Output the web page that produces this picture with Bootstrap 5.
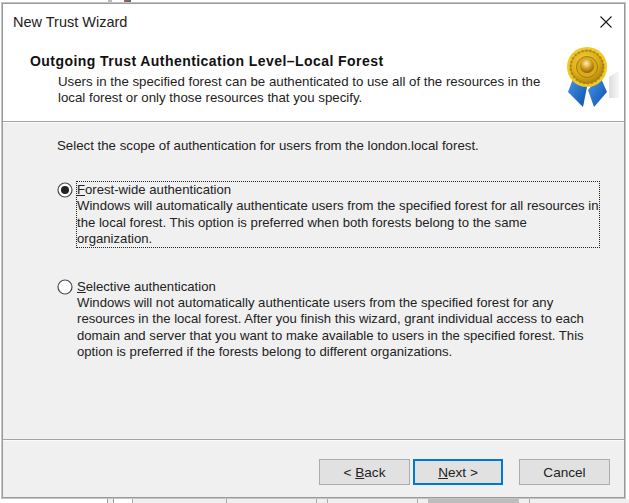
<!DOCTYPE html>
<html lang="en"><head><meta charset="utf-8"><title>New Trust Wizard</title>
<link href="https://cdn.jsdelivr.net/npm/bootstrap@5.3.0/dist/css/bootstrap.min.css" rel="stylesheet">
<style>
html,body{margin:0;height:503px;overflow:hidden;background:#fff}
body{font-family:"Liberation Sans",Arial,sans-serif;font-size:13.28px;line-height:16.2px;color:#222}
.stripa{height:2px;background:linear-gradient(90deg,#fff 108px,#bbb 108px,#bbb 112px,#fff 112px,#fff 124px,#9a6a50 124px,#6a5a80 131px,#fff 131px)}
.stripb{height:5px;margin-top:1px;background:linear-gradient(90deg,#fff 107px,#999 107px,#999 108px,#f0f0f0 108px,#f0f0f0 113px,#999 113px,#999 114px,#fff 114px,#fff 132px,#aaa 132px,#aaa 133px,#f0f0f0 133px,#f0f0f0 226px,#aaa 226px,#aaa 227px,#f0f0f0 227px,#f0f0f0 316px,#aaa 316px,#aaa 317px,#f0f0f0 317px,#f0f0f0 327px,#aaa 327px,#aaa 328px,#f0f0f0 328px,#f0f0f0 417px,#aaa 417px,#aaa 418px,#f0f0f0 418px,#f0f0f0 428px,#bdbdbd 428px,#bdbdbd 519px,#f0f0f0 519px,#f0f0f0 529px,#aaa 529px,#aaa 530px,#f0f0f0 530px)}
.wiz{height:495px;margin:1px 4px 0 2px;border:1px solid #9a9a9a;box-shadow:0 0 0 1px #c4c4c4;background:#f0f0f0;display:flex;flex-direction:column}
.top{background:#fff;height:118px;border-bottom:1px solid #a3a3a3;box-shadow:0 1px 0 #fbfbfb;flex:none;position:relative}
.ttl{height:38px;padding:9px 0 0 10px;font-size:14.5px;line-height:18px}
.xbtn{position:absolute;right:11px;top:11px;width:14px;height:14px}
.hd{font-weight:700;font-size:14px;letter-spacing:.44px;line-height:17px;margin:11px 0 0 27px;color:#111}
.sub{margin:4px 0 0 55px;width:520px}
.med{position:absolute;left:562px;top:40px;width:56px;height:64px}
.mid{flex:1;padding:16px 0 0 54px;position:relative}
.intro{margin-bottom:28px}
.opt{display:flex;align-items:flex-start}
.rad{width:16px;height:16px;flex:none;margin:0 4px 0 0}
.lbl{width:524px;font-size:13.15px}
.dots{border:1px dotted #222;margin:-1px;width:524px;white-space:nowrap}
.opt2{margin-top:32px}
.lbl2{white-space:nowrap}
.uk{text-decoration:underline}
.bot{height:58px;flex:none;border-top:1px solid #a3a3a3;box-shadow:inset 0 1px 0 #fbfbfb;display:flex;justify-content:flex-end;align-items:flex-start;padding:19px 14px 0 0}
.wbtn{width:91px;height:26px;background:#e1e1e1;border:1px solid #adadad;border-radius:0;padding:0;font-size:13.6px;line-height:23px;color:#222}
.wbtn:hover{background:#e1e1e1}
.nx{width:90px;border:2px solid #0078d7;margin:0 16px 0 3px}
</style></head><body>
<div class="stripa"></div>
<div class="wiz">
  <div class="top">
    <div class="ttl">New Trust Wizard</div>
    <svg class="xbtn" viewBox="0 0 14 14"><path d="M1.5 1.5 12.5 12.5M12.5 1.5 1.5 12.5" stroke="#1a1a1a" stroke-width="1.1" fill="none"/></svg>
    <div class="hd">Outgoing Trust Authentication Level–Local Forest</div>
    <div class="sub">Users in the specified forest can be authenticated to use all of the resources in the<br>local forest or only those resources that you specify.</div>
    <svg class="med" viewBox="0 0 56 64">
      <defs>
        <radialGradient id="g1" cx=".42" cy=".35" r=".7"><stop offset="0" stop-color="#f5d24a"/><stop offset=".6" stop-color="#dcae18"/><stop offset="1" stop-color="#a87a0c"/></radialGradient>
        <radialGradient id="g2" cx=".45" cy=".32" r=".7"><stop offset="0" stop-color="#fdf0c0"/><stop offset=".55" stop-color="#cf9a14"/><stop offset="1" stop-color="#8a6208"/></radialGradient>
        <linearGradient id="b1" x1="0" y1="0" x2="1" y2="1"><stop offset="0" stop-color="#4a98e8"/><stop offset="1" stop-color="#0b4fae"/></linearGradient>
        <linearGradient id="sh" x1="0" y1="0" x2="1" y2="0"><stop offset="0" stop-color="#dcdcdc"/><stop offset="1" stop-color="#f8f8f8"/></linearGradient>
      </defs>
      <path d="M44 33 54 27V54H44Z" fill="url(#sh)"/>
      <path d="M9 32 3 48 18 63 22 43Z" fill="url(#b1)"/>
      <path d="M23 46 29 63 42 48 35 32Z" fill="url(#b1)"/>
      <circle cx="22" cy="23" r="20" fill="#f0c828"/>
      <circle cx="22" cy="23" r="16.5" fill="url(#g1)" stroke="#b88c14" stroke-width="1"/>
      <circle cx="22" cy="23" r="16.5" fill="none" stroke="#8f6a0c" stroke-width="2.5" stroke-dasharray="1.5 2.5" opacity=".5"/>
      <circle cx="22" cy="23" r="10.5" fill="#d9aa1c" stroke="#a67c0e" stroke-width="1"/>
      <circle cx="22" cy="22" r="7" fill="url(#g2)"/>
    </svg>
  </div>
  <div class="mid">
    <div class="intro">Select the scope of authentication for users from the london.local forest.</div>
    <div class="opt">
      <svg class="rad" viewBox="0 0 16 16"><circle cx="8" cy="8" r="7" fill="#fff" stroke="#4a4a4a" stroke-width="1.2"/><circle cx="8" cy="8" r="4" fill="#222"/></svg>
      <div class="lbl dots"><span class="uk">F</span>orest-wide authentication<br>Windows will automatically authenticate users from the specified forest for all resources in<br>the local forest. This option is preferred when both forests belong to the same<br>organization.</div>
    </div>
    <div class="opt opt2">
      <svg class="rad" viewBox="0 0 16 16"><circle cx="8" cy="8" r="7" fill="#fff" stroke="#4a4a4a" stroke-width="1.2"/></svg>
      <div class="lbl lbl2"><span class="uk">S</span>elective authentication<br>Windows will not automatically authenticate users from the specified forest for any<br>resources in the local forest. After you finish this wizard, grant individual access to each<br>domain and server that you want to make available to users in the specified forest. This<br>option is preferred if the forests belong to different organizations.</div>
    </div>
  </div>
  <div class="bot">
    <button class="btn wbtn">&lt; <span class="uk">B</span>ack</button>
    <button class="btn wbtn nx"><span class="uk">N</span>ext &gt;</button>
    <button class="btn wbtn">Cancel</button>
  </div>
</div>
<div class="stripb"></div>
</body></html>
